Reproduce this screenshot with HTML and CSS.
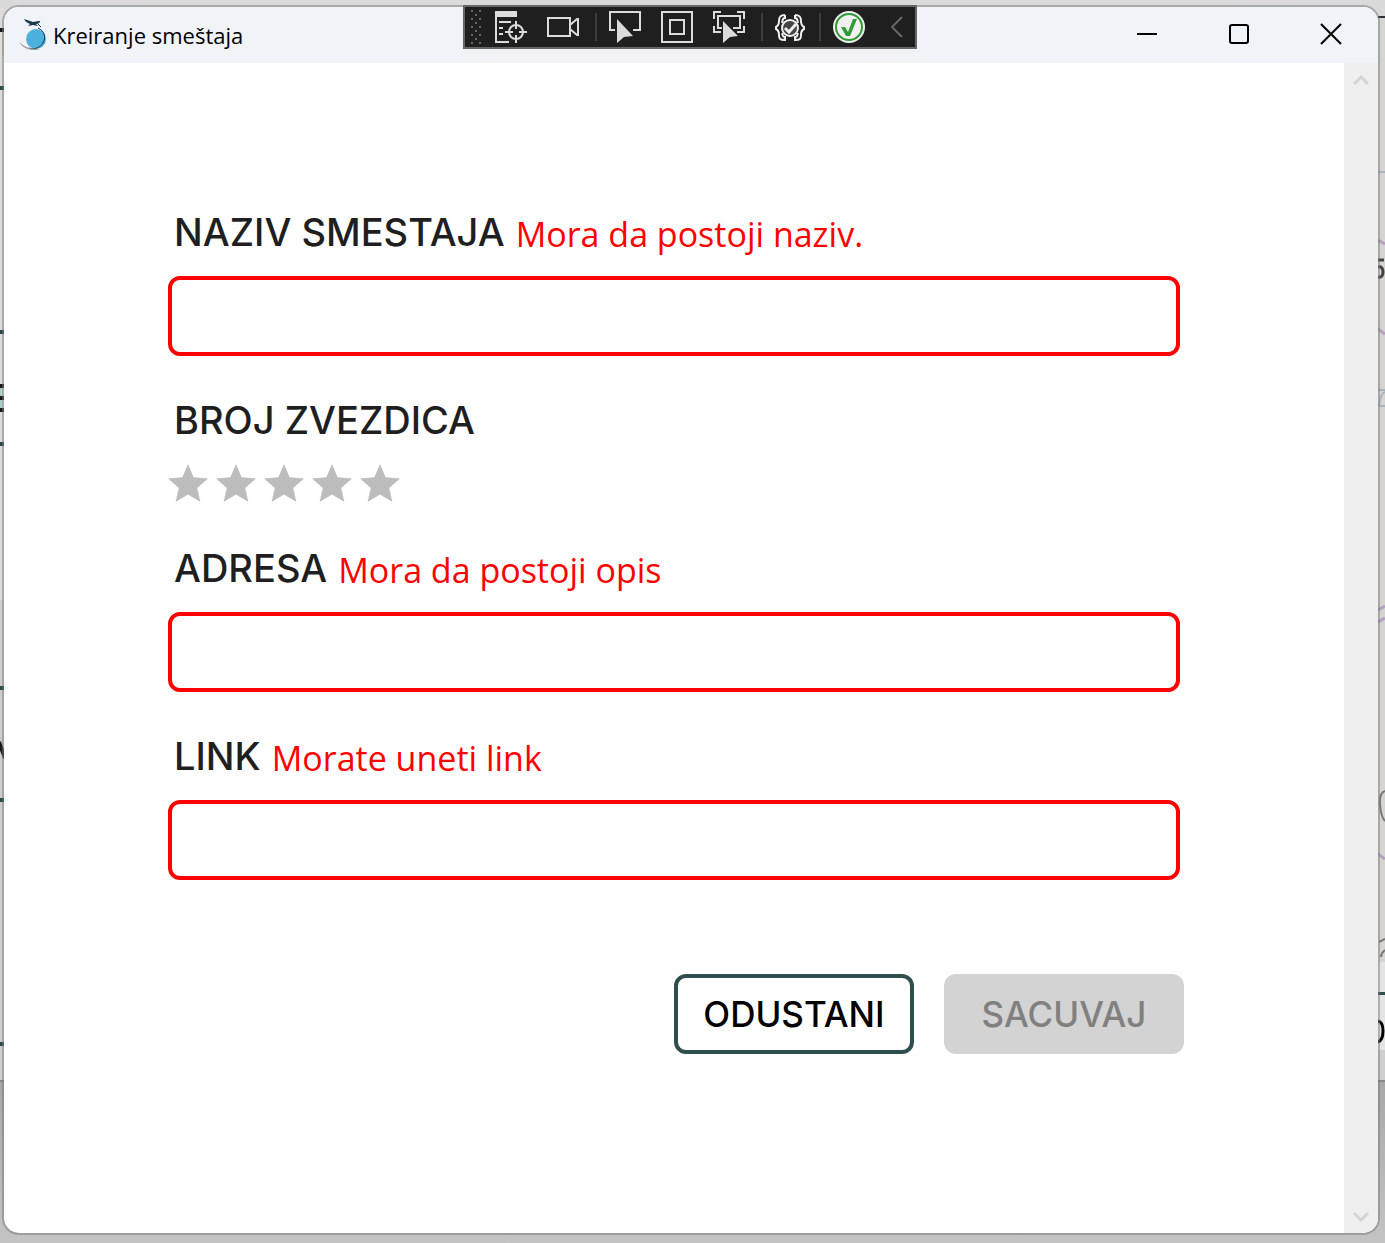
FILE: index.html
```html
<!DOCTYPE html>
<html lang="sr-Latn">
<head>
<meta charset="utf-8">
<meta name="viewport" content="width=device-width, initial-scale=1">
<title>Kreiranje smeštaja</title>
<link rel="stylesheet" href="styles.css">
</head>
<body>
<div class="behind behind-left" aria-hidden="true">
  <svg width="4" height="1082" shape-rendering="crispEdges">
    <path fill="#dcdcdc" d="M0 7h4v1073H0z"/>
    <path fill="#c8c8c8" d="M0 600h4v480H0z" opacity=".7"/>
    <path fill="#d9c7a5" d="M2 32h2v24H2z"/>
    <path fill="#a9cfcb" d="M0 386h2v22H0z"/>
    <path fill="#1a1a1a" d="M0 28h4v4H0zM0 384h4v4H0zM0 396h4v4H0zM0 408h4v4H0z"/>
    <path fill="#29484a" d="M0 86h4v4H0zM0 330h4v4H0zM0 442h4v4H0zM0 686h4v4H0zM0 798h4v4H0zM0 1042h4v4H0z"/>
    <path fill="#888" d="M0 1080h4v2H0z"/>
    <path stroke="#1a1a1a" stroke-width="4" shape-rendering="auto" d="M-1 742l6 16"/>
  </svg>
</div>
<div class="behind behind-right" aria-hidden="true">
  <svg width="7" height="1082">
    <path fill="#d6d4d0" d="M0 16h7v950H0z"/>
    <path fill="#e4e4e4" d="M0 962h7v88H0z"/>
    <path fill="#cfcfcf" d="M0 1050h7v30H0z"/>
    <path fill="#33303a" d="M0 16h7v2H0z"/>
    <path fill="none" stroke="#b69fc0" stroke-width="3" d="M0 240l7 4M0 329l7 5M0 610l7-4M0 622l7-4M0 854l7 5"/>
    <path fill="none" stroke="#a5b4c0" stroke-width="2" d="M0 172h7M0 390h7M1 406q1-12 6-14M1 406h6"/>
    <path fill="none" stroke="#444" stroke-width="3" d="M0 260h6M0 277q5 1 5-5t-5-5"/>
    <path fill="none" stroke="#777" stroke-width="2" d="M7 791q-6 2-5 14t5 16M1 942l6-3M7 950q-4 3-4 7"/>
    <path fill="#2f4f4f" d="M0 992h7v3H0z"/>
    <path fill="none" stroke="#000" stroke-width="3" d="M0 1021q5 1 5 10t-5 11"/>
    <path fill="#888" d="M0 1080h7v2H0z"/>
  </svg>
</div>

<div class="window">
  <header class="titlebar">
    <svg class="app-icon" width="30" height="34" viewBox="0 0 30 34">
      <circle cx="18" cy="21" r="10" fill="#4cb1dd"/>
      <path d="M20 10c7 3 8 10 5 15-3 5-9 7-14 5" fill="none" stroke="#173b4d" stroke-width="1"/>
      <path d="M22 31C12 34 4 30 1 23c3 5 10 8 19 8z" fill="#999"/>
      <path d="M19 5l4 4" stroke="#173b4d" stroke-width="1"/>
      <path d="M6 1l9 3 6-1c2 0 1 1 0 2l-3 1 2 2-5-1-5 1 2-2c-3-1-5-3-6-5z" fill="#173b4d"/>
    </svg>
    <h1 class="title">Kreiranje smeštaja</h1>
    <div class="caption-buttons">
      <button type="button" class="caption-button" aria-label="Minimize"><svg width="22" height="22"><path d="M1 11h20" stroke="#000" stroke-width="2"/></svg></button>
      <button type="button" class="caption-button" aria-label="Maximize"><svg width="22" height="22"><rect x="2" y="2" width="18" height="18" rx="2" fill="none" stroke="#000" stroke-width="2"/></svg></button>
      <button type="button" class="caption-button" aria-label="Close"><svg width="22" height="22"><path d="M1 1l20 20M21 1L1 21" stroke="#000" stroke-width="2"/></svg></button>
    </div>
  </header>

  <div class="debugbar" role="toolbar" aria-label="Debug">
    <svg class="grip" width="10" height="34" fill="#666"><path d="M0 0h2v2H0zM8 0h2v2H8zM4 4h2v2H4zM0 8h2v2H0zM8 8h2v2H8zM4 12h2v2H4zM0 16h2v2H0zM8 16h2v2H8zM4 20h2v2H4zM0 24h2v2H0zM8 24h2v2H8zM4 28h2v2H4zM0 32h2v2H0zM8 32h2v2H8z"/></svg>
    <div class="tools">
      <button type="button" class="tool" aria-label="Live visual tree"><svg width="32" height="32" fill="none" stroke="#dcdcdc" stroke-width="2"><path d="M0 0h22v6H0z" fill="#dcdcdc" stroke="none"/><path d="M1 5v26h13M4 11h12M4 17h4M4 23h4"/><circle cx="21" cy="21" r="7"/><path d="M21 10v8M21 24v8M10 21h8M24 21h8"/></svg></button>
      <button type="button" class="tool" aria-label="Record"><svg width="32" height="32" fill="none" stroke="#dcdcdc" stroke-width="2"><path d="M1 7h22v18H1zM23 14l7-6h1v16h-1l-7-6"/></svg></button>
    </div>
    <span class="divider"></span>
    <div class="tools">
      <button type="button" class="tool" aria-label="Select element"><svg width="32" height="32"><path d="M6 19H1V1h30v18h-7" fill="none" stroke="#dcdcdc" stroke-width="2"/><path d="M8 8l16 17-9 1-7 6z" fill="#dcdcdc"/></svg></button>
      <button type="button" class="tool" aria-label="Layout adorners"><svg width="32" height="32" fill="none" stroke="#dcdcdc" stroke-width="2"><path d="M1 1h30v30H1zM9 9h14v14H9z"/></svg></button>
      <button type="button" class="tool" aria-label="Track focus"><svg width="32" height="32"><path d="M1 8V1h7M24 1h7v7M1 15v6h7M31 15v6h-7M9 17H5V5h22v12h-7" fill="none" stroke="#dcdcdc" stroke-width="2"/><path d="M10 10l15 15-8 1-7 6z" fill="#dcdcdc"/></svg></button>
    </div>
    <span class="divider"></span>
    <button type="button" class="tool" aria-label="Binding failures"><svg width="32" height="32" fill="none" stroke="#f0f0f0" stroke-width="2"><circle cx="15" cy="17" r="8" fill="#444"/><path d="M10 17l4 4 7-8" stroke-width="3"/><path d="M10 4C5 4 4 6 4 10c0 4-1 5-3 6v2c2 1 3 2 3 6 0 4 1 5 6 5v-3c-3 0-2-2-3-4M10 4v3c-3 0-2 2-3 5M20 4c5 0 6 2 6 6 0 4 1 5 3 6v2c-2 1-3 2-3 6 0 4-1 5-6 5v-3c3 0 2-2 3-4M20 4v3c3 0 2 2 3 5"/></svg></button>
    <span class="divider divider-near"></span>
    <button type="button" class="tool" aria-label="Hot reload"><svg width="32" height="32"><circle cx="16" cy="16" r="16" fill="#f0f0f0"/><circle cx="16" cy="16" r="13" fill="none" stroke="#2f9b34" stroke-width="2"/><path d="M8 16h4l3 5 5-13h4l-7 17h-4z" fill="#2f9b34"/></svg></button>
    <button type="button" class="tool tool-collapse" aria-label="Collapse"><svg width="32" height="32" fill="none" stroke="#666" stroke-width="2"><path d="M21 6L11 16l10 10"/></svg></button>
  </div>

  <div class="client">
    <form class="form">
      <div class="field">
        <div class="label-row"><label class="label" for="naziv">NAZIV SMESTAJA</label><span class="error" id="naziv-error">Mora da postoji naziv.</span></div>
        <input class="input" id="naziv" type="text" aria-describedby="naziv-error">
      </div>
      <div class="field" role="radiogroup" aria-labelledby="zvezdice">
        <div class="label-row"><span class="label" id="zvezdice">BROJ ZVEZDICA</span></div>
        <div class="stars">
          <input class="star" type="radio" name="zvezdice" value="1" aria-label="1">
          <input class="star" type="radio" name="zvezdice" value="2" aria-label="2">
          <input class="star" type="radio" name="zvezdice" value="3" aria-label="3">
          <input class="star" type="radio" name="zvezdice" value="4" aria-label="4">
          <input class="star" type="radio" name="zvezdice" value="5" aria-label="5">
        </div>
      </div>
      <div class="field">
        <div class="label-row"><label class="label" for="adresa">ADRESA</label><span class="error" id="adresa-error">Mora da postoji opis</span></div>
        <input class="input" id="adresa" type="text" aria-describedby="adresa-error">
      </div>
      <div class="field">
        <div class="label-row"><label class="label" for="link">LINK</label><span class="error" id="link-error">Morate uneti link</span></div>
        <input class="input" id="link" type="text" aria-describedby="link-error">
      </div>
      <div class="actions">
        <button type="button" class="button button-outline">ODUSTANI</button>
        <button type="submit" class="button" disabled>SACUVAJ</button>
      </div>
    </form>
    <div class="scrollbar">
      <button type="button" class="scroll-button" aria-label="Scroll up"><svg width="16" height="12"><path d="M1 10l7-7 7 7" fill="none" stroke="#d4d4d4" stroke-width="3"/></svg></button>
      <button type="button" class="scroll-button" aria-label="Scroll down"><svg width="16" height="12"><path d="M1 3l7 7 7-7" fill="none" stroke="#d4d4d4" stroke-width="3"/></svg></button>
    </div>
  </div>
</div>
</body>
</html>
```
FILE: styles.css
```css
* { box-sizing: border-box; }

body {
  margin: 0;
  min-height: 100vh;
  padding: 5px 5px 8px 2px;
  display: flex;
  position: relative;
  overflow-x: hidden;
  background: linear-gradient(#dadada 0, #d8d8d8 1080px, #a8a8a8 1082px, #c4c4c4 100%);
  font-family: "Open Sans", "Noto Sans", sans-serif;
}

button {
  border: 0;
  padding: 0;
  background: none;
  font: inherit;
}

svg { display: block; }

/* Edges of the parent window that show beside the dialog */
.behind { position: absolute; top: 0; }
.behind-left { left: 0; }
.behind-right { right: 0; }

.window {
  position: relative;
  flex: 1;
  display: flex;
  flex-direction: column;
  border: 2px solid rgba(120, 120, 120, .5);
  border-radius: 17px;
  background: #fff;
  background-clip: padding-box;
}

.titlebar {
  display: flex;
  align-items: center;
  height: 56px;
  padding-left: 14px;
  border-radius: 15px 15px 0 0;
  background: linear-gradient(90deg, #f0f3f8, #f3f3f5 50%, #f0f3f8);
}

.title {
  flex: 1;
  margin: 0 0 0 5px;
  font-size: 22px;
  font-weight: 400;
  line-height: 32px;
  color: #000;
}

.caption-buttons {
  display: flex;
  align-self: flex-start;
  padding-right: 1px;
}

.caption-button {
  width: 92px;
  height: 54px;
  display: grid;
  place-items: center;
}

.debugbar {
  position: absolute;
  top: -2px;
  left: calc(50% - 228px);
  width: 454px;
  height: 44px;
  display: flex;
  align-items: center;
  padding-left: 6px;
  border: 2px solid #666;
  background: #1f1f1f;
}

.grip { margin-right: 14px; }
.tools { display: flex; gap: 20px; }
.tool { width: 32px; height: 32px; }
.tool-collapse { margin-left: 16px; }

.divider {
  width: 2px;
  height: 28px;
  margin: 0 12px 0 16px;
  background: #3d3d3d;
}

.divider-near { margin-left: 12px; }

.client {
  flex: 1;
  display: flex;
}

.form {
  flex: 1;
  padding: 145px 160px 100px;
}

.field {
  display: flex;
  flex-direction: column;
  gap: 12px;
  margin: 0 4px 40px;
}

.label-row {
  display: flex;
  align-items: flex-start;
  gap: 11px;
  height: 56px;
  padding-left: 6px;
}

.label {
  font-family: Inter, sans-serif;
  font-size: 38px;
  font-weight: 500;
  line-height: 48px;
  color: #1f1f1f;
}

.error {
  font-size: 34px;
  line-height: 52px;
  color: #f00;
}

.input {
  width: 100%;
  height: 80px;
  padding: 0 16px;
  border: 4px solid #f00;
  border-radius: 12px;
  background: #fff;
  font: inherit;
  font-size: 34px;
}

.stars { display: flex; gap: 8px; }

.star {
  appearance: none;
  width: 40px;
  height: 40px;
  margin: 0;
  background: #bdbdbd;
  clip-path: polygon(50% 0, 64% 33%, 100% 36%, 73% 60%, 81% 95%, 50% 76%, 19% 95%, 27% 60%, 0 36%, 36% 33%);
}

.star:has(~ .star:checked), .star:checked { background: #2f4f4f; }

.actions {
  display: flex;
  justify-content: flex-end;
  gap: 30px;
  padding-top: 54px;
}

.button {
  width: 240px;
  height: 80px;
  border-radius: 12px;
  font-family: Inter, sans-serif;
  font-size: 35px;
  font-weight: 500;
  color: #000;
}

.button-outline {
  border: 4px solid #2f4f4f;
  background: #fff;
}

.button:disabled {
  background: #d3d3d3;
  color: #808080;
}

.scrollbar {
  width: 34px;
  display: flex;
  flex-direction: column;
  justify-content: space-between;
  border-radius: 0 0 15px 0;
  background: #efefef;
}

.scroll-button {
  width: 34px;
  height: 34px;
  display: grid;
  place-items: center;
}
```
